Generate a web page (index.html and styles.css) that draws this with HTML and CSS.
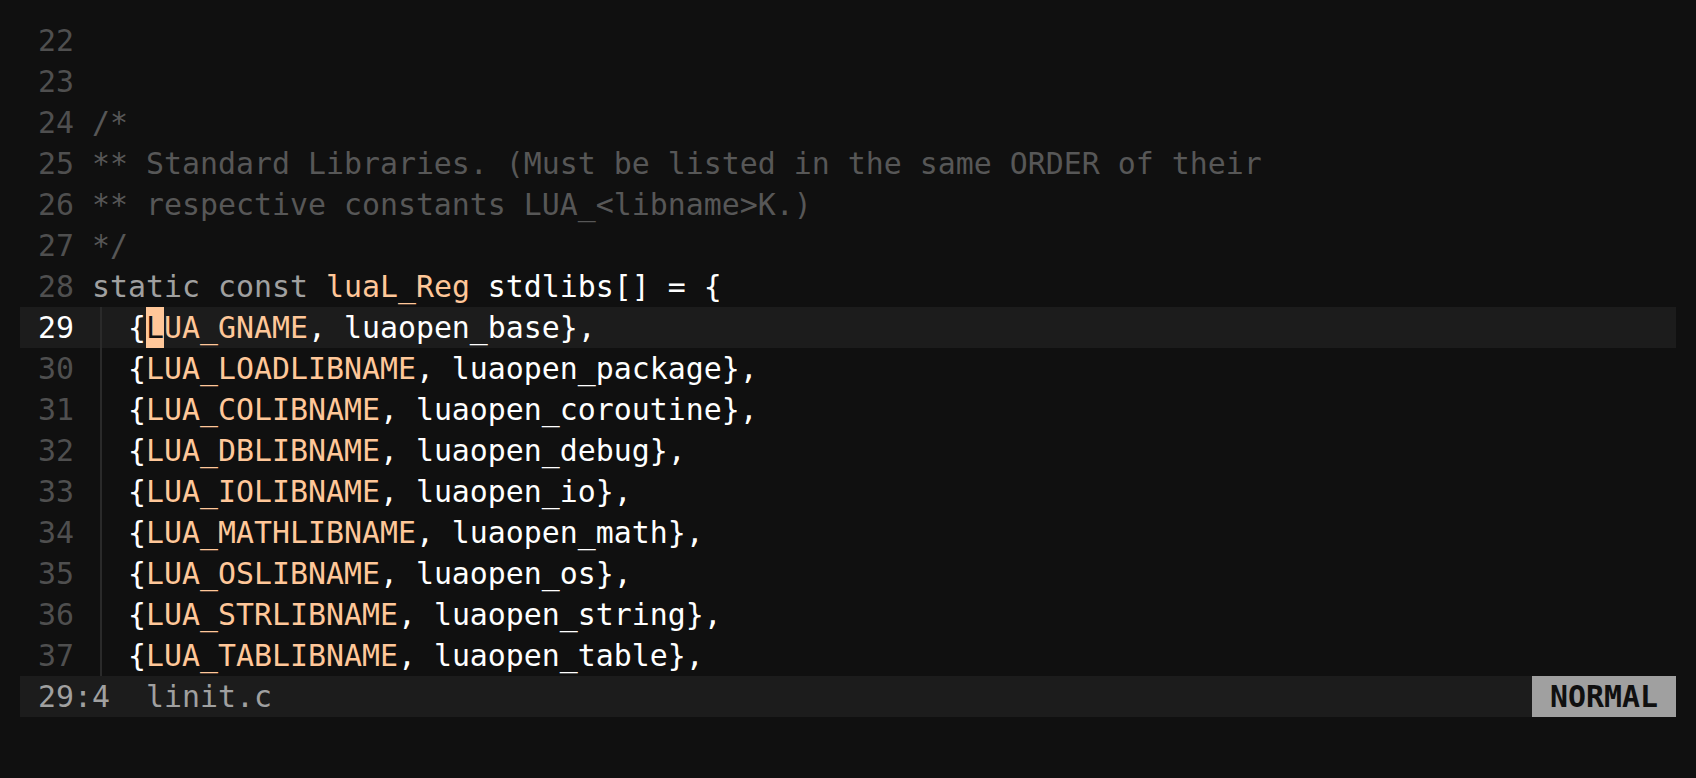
FILE: index.html
```html
<!DOCTYPE html>
<html lang="en">
<head>
<meta charset="utf-8">
<title>linit.c</title>
<link rel="stylesheet" href="styles.css">
</head>
<body>
<div class="editor">
  <div class="buffer">
    <div class="line"><span class="ln">22</span><span class="code"></span></div>
    <div class="line"><span class="ln">23</span><span class="code"></span></div>
    <div class="line"><span class="ln">24</span><span class="code cm">/*</span></div>
    <div class="line"><span class="ln">25</span><span class="code cm">** Standard Libraries. (Must be listed in the same ORDER of their</span></div>
    <div class="line"><span class="ln">26</span><span class="code cm">** respective constants LUA_&lt;libname&gt;K.)</span></div>
    <div class="line"><span class="ln">27</span><span class="code cm">*/</span></div>
    <div class="line"><span class="ln">28</span><span class="code"><span class="kw">static const</span> <span class="ty">luaL_Reg</span> stdlibs[] = {</span></div>
    <div class="line current"><span class="ln">29</span><span class="ig"></span><span class="code"> {<span class="cursor">L</span><span class="ty">UA_GNAME</span>, luaopen_base},</span></div>
    <div class="line"><span class="ln">30</span><span class="ig"></span><span class="code"> {<span class="ty">LUA_LOADLIBNAME</span>, luaopen_package},</span></div>
    <div class="line"><span class="ln">31</span><span class="ig"></span><span class="code"> {<span class="ty">LUA_COLIBNAME</span>, luaopen_coroutine},</span></div>
    <div class="line"><span class="ln">32</span><span class="ig"></span><span class="code"> {<span class="ty">LUA_DBLIBNAME</span>, luaopen_debug},</span></div>
    <div class="line"><span class="ln">33</span><span class="ig"></span><span class="code"> {<span class="ty">LUA_IOLIBNAME</span>, luaopen_io},</span></div>
    <div class="line"><span class="ln">34</span><span class="ig"></span><span class="code"> {<span class="ty">LUA_MATHLIBNAME</span>, luaopen_math},</span></div>
    <div class="line"><span class="ln">35</span><span class="ig"></span><span class="code"> {<span class="ty">LUA_OSLIBNAME</span>, luaopen_os},</span></div>
    <div class="line"><span class="ln">36</span><span class="ig"></span><span class="code"> {<span class="ty">LUA_STRLIBNAME</span>, luaopen_string},</span></div>
    <div class="line"><span class="ln">37</span><span class="ig"></span><span class="code"> {<span class="ty">LUA_TABLIBNAME</span>, luaopen_table},</span></div>
  </div>
  <div class="statusline">
    <span class="status-left">29:4  linit.c</span>
    <span class="mode">NORMAL</span>
  </div>
</div>
</body>
</html>
```
FILE: styles.css
```css
html, body {
  margin: 0;
  padding: 0;
  background: #101010;
}

body {
  font-family: "DejaVu Sans Mono", "Liberation Mono", monospace;
  font-size: 29.9px;
  color: #ffffff;
}

.editor {
  padding: 20px;
}

.line {
  display: flex;
  height: 41px;
  line-height: 41px;
  white-space: pre;
}

.line.current {
  background: #1c1c1c;
}

.ln {
  width: 2ch;
  padding: 0 1ch;
  text-align: right;
  color: #4f4f4f;
  flex: none;
}

.current .ln {
  color: #ffffff;
}

.ig {
  width: 1ch;
  flex: none;
  background: linear-gradient(#2a2a2a, #2a2a2a) no-repeat 8px 0 / 2px 100%;
}

.code {
  white-space: pre;
}

.cm {
  color: #575757;
}

.kw {
  color: #a0a0a0;
}

.ty {
  color: #ffc799;
}

.cursor {
  background: #ffc799;
  color: #101010;
  display: inline-block;
  height: 41px;
  vertical-align: top;
}

.statusline {
  display: flex;
  justify-content: space-between;
  align-items: stretch;
  height: 41px;
  line-height: 41px;
  background: #1c1c1c;
  white-space: pre;
}

.status-left {
  padding-left: 1ch;
  color: #a0a0a0;
}

.mode {
  padding: 0 1ch;
  background: #a0a0a0;
  color: #101010;
  font-weight: bold;
}
```
